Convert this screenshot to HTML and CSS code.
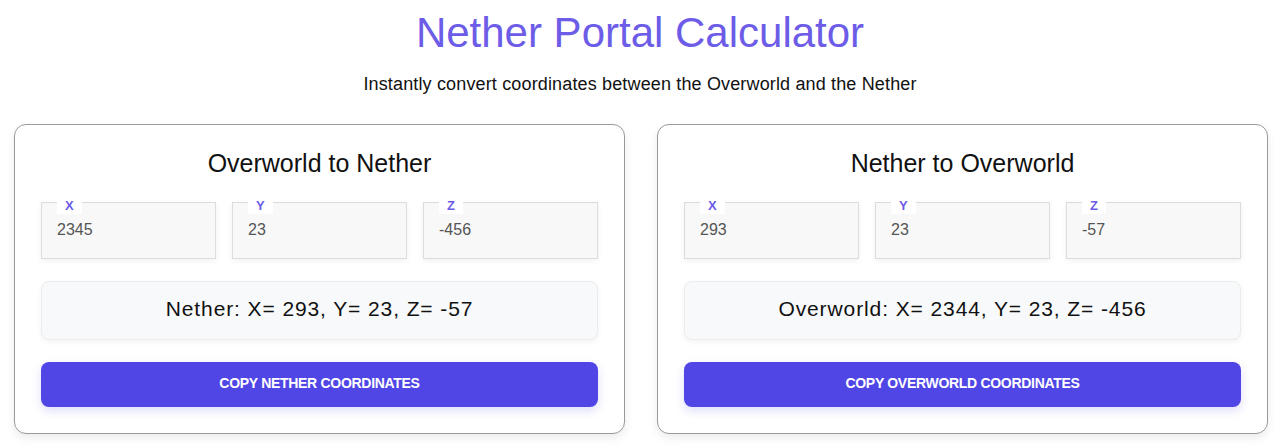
FILE: index.html
```html
<!DOCTYPE html>
<html lang="en">
<head>
<meta charset="utf-8">
<title>Nether Portal Calculator</title>
<link rel="stylesheet" href="styles.css">
</head>
<body>
  <header class="header">
    <h1 class="title">Nether Portal Calculator</h1>
    <p class="subtitle">Instantly convert coordinates between the Overworld and the Nether</p>
  </header>
  <main class="cards">
    <section class="card">
      <h2 class="card-title">Overworld to Nether</h2>
      <div class="fields">
        <div class="field"><span class="label">X</span><span class="value">2345</span></div>
        <div class="field"><span class="label">Y</span><span class="value">23</span></div>
        <div class="field"><span class="label">Z</span><span class="value">-456</span></div>
      </div>
      <div class="result">Nether: X= 293, Y= 23, Z= -57</div>
      <button class="copy-btn">COPY NETHER COORDINATES</button>
    </section>
    <section class="card">
      <h2 class="card-title">Nether to Overworld</h2>
      <div class="fields">
        <div class="field"><span class="label">X</span><span class="value">293</span></div>
        <div class="field"><span class="label">Y</span><span class="value">23</span></div>
        <div class="field"><span class="label">Z</span><span class="value">-57</span></div>
      </div>
      <div class="result">Overworld: X= 2344, Y= 23, Z= -456</div>
      <button class="copy-btn">COPY OVERWORLD COORDINATES</button>
    </section>
  </main>
</body>
</html>
```

FILE: styles.css
```css
* { box-sizing: border-box; }
html, body { margin: 0; padding: 0; background: #ffffff; }
body {
  font-family: "Liberation Sans", Arial, sans-serif;
  color: #111;
  width: 1280px;
  height: 448px;
  overflow: hidden;
}
.header { text-align: center; padding-top: 9px; }
.title {
  margin: 0;
  font-size: 42px;
  font-weight: 400;
  line-height: 48px;
  color: #6c5ce7;
}
.subtitle {
  margin: 16px 0 0;
  font-size: 18px;
  letter-spacing: 0.15px;
  line-height: 22px;
  color: #111;
}
.cards {
  display: flex;
  gap: 32px;
  padding: 0 12px 0 14px;
  margin-top: 29px;
}
.card {
  flex: 1;
  height: 310px;
  border: 1px solid #9a9a9a;
  border-radius: 12px;
  box-shadow: 0 4px 10px rgba(0,0,0,0.08);
  padding: 22px 26px 0 26px;
  background: #fff;
}
.card-title {
  margin: 0;
  text-align: center;
  font-size: 25px;
  font-weight: 400;
  line-height: 32px;
  color: #111;
}
.fields {
  display: flex;
  gap: 16px;
  margin-top: 23px;
}
.field {
  position: relative;
  flex: 1;
  height: 57px;
  background: #f8f8f8;
  border: 1px solid #dcdcdc;
  box-shadow: 0 2px 6px rgba(0,0,0,0.06);
  padding: 16px 0 0 15px;
}
.label {
  position: absolute;
  top: -5px;
  left: 15px;
  padding: 0 8px;
  background: #fff;
  color: #6c5ce7;
  font-size: 13px;
  font-weight: 700;
  line-height: 16px;
}
.value {
  font-size: 16px;
  line-height: 22px;
  color: #555;
}
.result {
  margin-top: 22px;
  height: 59px;
  padding-bottom: 3px;
  background: #f8f9fa;
  border: 1px solid #ececec;
  border-radius: 8px;
  box-shadow: 0 2px 6px rgba(0,0,0,0.05);
  display: flex;
  align-items: center;
  justify-content: center;
  font-size: 21px;
  letter-spacing: 0.9px;
  color: #111;
}
.copy-btn {
  display: block;
  width: 100%;
  margin-top: 22px;
  height: 45px;
  padding: 0 0 4px;
  border: none;
  border-radius: 8px;
  background: #5046e5;
  color: #fff;
  font-family: "Liberation Sans", Arial, sans-serif;
  font-size: 14px;
  font-weight: 700;
  letter-spacing: -0.3px;
  box-shadow: 0 4px 10px rgba(80,70,229,0.18);
}
```
